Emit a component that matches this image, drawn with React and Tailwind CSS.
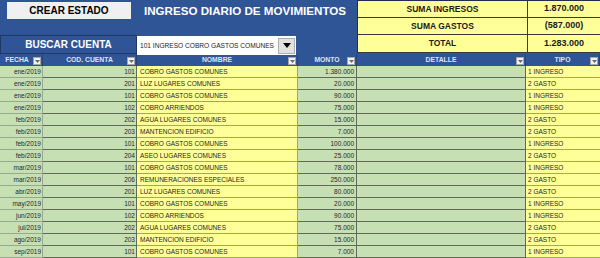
const ROWS = [
  ['ene/2019', '101', 'COBRO GASTOS COMUNES', '1.380.000', '1 INGRESO'],
  ['ene/2019', '201', 'LUZ LUGARES COMUNES', '20.000', '2 GASTO'],
  ['ene/2019', '101', 'COBRO GASTOS COMUNES', '90.000', '1 INGRESO'],
  ['ene/2019', '102', 'COBRO ARRIENDOS', '75.000', '1 INGRESO'],
  ['feb/2019', '202', 'AGUA LUGARES COMUNES', '15.000', '2 GASTO'],
  ['feb/2019', '203', 'MANTENCION EDIFICIO', '7.000', '2 GASTO'],
  ['feb/2019', '101', 'COBRO GASTOS COMUNES', '100.000', '1 INGRESO'],
  ['feb/2019', '204', 'ASEO LUGARES COMUNES', '25.000', '2 GASTO'],
  ['mar/2019', '101', 'COBRO GASTOS COMUNES', '78.000', '1 INGRESO'],
  ['mar/2019', '206', 'REMUNERACIONES ESPECIALES', '250.000', '2 GASTO'],
  ['abr/2019', '201', 'LUZ LUGARES COMUNES', '80.000', '2 GASTO'],
  ['may/2019', '101', 'COBRO GASTOS COMUNES', '20.000', '1 INGRESO'],
  ['jun/2019', '102', 'COBRO ARRIENDOS', '90.000', '1 INGRESO'],
  ['jul/2019', '202', 'AGUA LUGARES COMUNES', '75.000', '2 GASTO'],
  ['ago/2019', '203', 'MANTENCION EDIFICIO', '15.000', '2 GASTO'],
  ['sep/2019', '101', 'COBRO GASTOS COMUNES', '7.000', '1 INGRESO'],
]

const SUMMARY = [
  ['SUMA INGRESOS', '1.870.000'],
  ['SUMA GASTOS', '(587.000)'],
  ['TOTAL', '1.283.000'],
]

const HEADERS = ['FECHA', 'COD. CUENTA', 'NOMBRE', 'MONTO', 'DETALLE', 'TIPO']

/* ── filter arrow box ── */
const FilterBtn = () => (
  <span className="absolute right-[1px] top-[3px] w-[8px] h-[8px] bg-[#f2f2f2] border border-[#a6a6a6] flex items-center justify-center">
    <svg width="5" height="3" viewBox="0 0 5 3">
      <path d="M0 0 L5 0 L2.5 3 Z" fill="#6b6b6b" />
    </svg>
  </span>
)

export default function App() {
  return (
    <div
      className="w-[600px] h-[258px] overflow-hidden bg-[#2f5597] flex flex-col"
      style={{ fontFamily: '"Liberation Sans", Arial, sans-serif' }}
    >
      {/* ── top block ── */}
      <div className="flex h-[55px]">
        <div className="w-[357px] flex flex-col">
          <div className="h-[35px] flex items-start pt-[2px]">
            <div className="ml-[7px] w-[124px] h-[17px] bg-[#f0f0f0] flex items-center justify-center text-[10px] font-bold text-black">
              CREAR ESTADO
            </div>
            <div className="flex-1 text-center text-white font-bold text-[11.6px] leading-none pt-[3px] pl-[2px]">
              INGRESO DIARIO DE MOVIMIENTOS
            </div>
          </div>
          <div className="flex h-[19px]">
            <div className="w-[137px] h-[19px] border border-[#1f3864] flex items-center justify-center text-white font-bold text-[10px]">
              BUSCAR CUENTA
            </div>
            <div className="w-[159px] h-[19px] mt-[1px] bg-white flex items-center">
              <span className="flex-1 pl-[3px] text-[6.6px] text-[#222]">101 INGRESO COBRO GASTOS COMUNES</span>
              <span className="w-[17px] h-[16px] mr-[1px] bg-[#e1e1e1] border border-[#adadad] flex items-center justify-center">
                <svg width="8" height="5" viewBox="0 0 8 5">
                  <path d="M0 0 L8 0 L4 5 Z" fill="#000" />
                </svg>
              </span>
            </div>
          </div>
        </div>
        <div className="w-[243px] flex flex-col border-l border-t border-[#1f2f4f] h-[53px] bg-[#ffff99]">
          {SUMMARY.map(([label, value]) => (
            <div key={label} className="flex h-[17px] border-b border-[#3b3b3b] last:h-[18px]">
              <div className="w-[170px] border-r border-[#3b3b3b] flex items-center justify-center text-[8.5px] font-bold text-[#1a1a1a]">
                {label}
              </div>
              <div className="flex-1 flex items-center justify-center text-[9px] font-bold text-[#1a1a1a]">
                {value}
              </div>
            </div>
          ))}
        </div>
      </div>

      {/* ── table header ── */}
      <div className="grid grid-cols-[43px_94px_161px_59px_169px_74px] h-[13px]">
        {HEADERS.map((h) => (
          <div
            key={h}
            className="relative flex items-center justify-center text-[6.8px] font-bold text-[#dde6f4] border-r border-[#24447c]"
          >
            <span className={h === 'FECHA' ? 'pr-[8px]' : ''}>{h}</span>
            <FilterBtn />
          </div>
        ))}
      </div>

      {/* ── rows ── */}
      <div className="flex flex-col">
        {ROWS.map((r, i) => (
          <div
            key={i}
            className="grid grid-cols-[43px_94px_161px_59px_169px_74px] h-[12px] text-[6.5px] text-[#262626] leading-none"
          >
            <div className="bg-[#c6e0b4] border-b border-r border-[#97a98c] flex items-center justify-end pr-[1px] pt-[1px]">{r[0]}</div>
            <div className="bg-[#c6e0b4] border-b border-r border-[#5f6b57] flex items-center justify-end pr-[1px] pt-[1px]">{r[1]}</div>
            <div className="bg-[#ffff99] border-b border-r border-[#a3a37a] flex items-center pl-[3px] pt-[1px]">{r[2]}</div>
            <div className="bg-[#c6e0b4] border-b border-r border-[#5f6b57] flex items-center justify-end pr-[2px] pt-[1px]">{r[3]}</div>
            <div className="bg-[#c6e0b4] border-b border-r border-[#5f6b57] flex items-center pt-[1px]" />
            <div className="bg-[#ffff99] border-b border-[#a3a37a] flex items-center pl-[2px] pt-[1px]">{r[4]}</div>
          </div>
        ))}
      </div>
    </div>
  )
}
